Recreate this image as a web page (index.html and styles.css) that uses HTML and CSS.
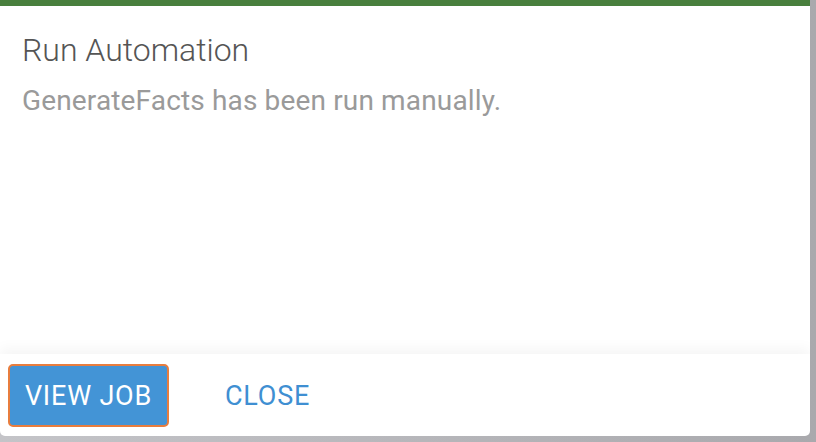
FILE: index.html
```html
<!DOCTYPE html>
<html lang="en">
<head>
    <meta charset="UTF-8">
    <meta name="viewport" content="width=device-width, initial-scale=1.0">
    <title>Run Automation</title>
    <link rel="stylesheet" href="styles.css">
</head>
<body>
    <div class="dialog">
        <div class="dialog-body">
            <h2 class="dialog-title">Run Automation</h2>
            <p class="dialog-text">GenerateFacts has been run manually.</p>
        </div>
        <div class="dialog-footer">
            <button class="btn btn-primary">VIEW JOB</button>
            <button class="btn btn-flat">CLOSE</button>
        </div>
    </div>
</body>
</html>
```

FILE: styles.css
```css
html, body {
    height: 100%;
}
body {
    margin: 0;
    font-family: Roboto, "Liberation Sans", sans-serif;
    background: linear-gradient(to right, #c4c4c8, #a9a9ad);
}
.dialog {
    width: 810px;
    height: 436px;
    box-sizing: border-box;
    background-color: #fff;
    border-top: 6px solid #497f3d;
    border-radius: 0 0 5px 5px;
    display: flex;
    flex-direction: column;
    overflow: hidden;
}
.dialog-body {
    flex: 1;
    padding: 28px 22px 0;
}
.dialog-title {
    margin: 0;
    font-size: 32px;
    font-weight: 300;
    color: #555;
    line-height: 32px;
}
.dialog-text {
    margin: 21px 0 0;
    font-size: 28px;
    letter-spacing: 0.15px;
    color: #9a9a9a;
    line-height: 28px;
}
.dialog-footer {
    height: 82px;
    display: flex;
    align-items: center;
    gap: 40px;
    padding-left: 8px;
    box-shadow: 0 -6px 12px rgba(0, 0, 0, 0.04);
}
.btn {
    font-family: inherit;
    font-size: 27px;
    letter-spacing: 0.8px;
    border: none;
    background: none;
    padding-top: 2px;
    cursor: pointer;
}
.btn-primary {
    width: 161px;
    height: 63px;
    color: #fff;
    background-color: #4394d6;
    border: 2px solid #e87d3e;
    border-radius: 5px;
}
.btn-flat {
    color: #3f8fd2;
    padding-left: 16px;
    padding-right: 16px;
    height: 63px;
}
```
